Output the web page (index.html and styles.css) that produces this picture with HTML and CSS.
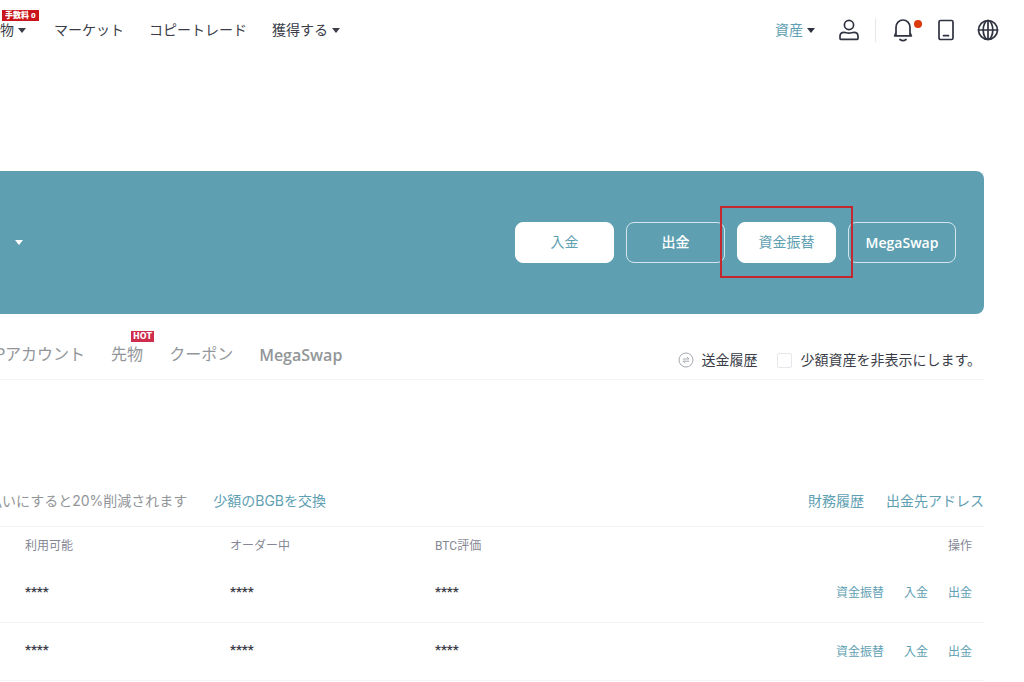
FILE: index.html
```html
<!DOCTYPE html>
<html lang="ja">
<head>
<meta charset="utf-8">
<meta name="viewport" content="width=device-width, initial-scale=1">
<title>資産</title>
<link rel="stylesheet" href="styles.css">
</head>
<body>
<header class="header">
  <nav class="nav">
    <a class="nav-item" href="#">物<span class="caret"></span><span class="badge badge-fee">手数料 0</span></a>
    <a class="nav-item" href="#">マーケット</a>
    <a class="nav-item" href="#">コピートレード</a>
    <a class="nav-item" href="#">獲得する<span class="caret"></span></a>
  </nav>
  <div class="tools">
    <a class="nav-item assets" href="#">資産<span class="caret"></span></a>
    <button class="icon-btn user" aria-label="アカウント"><svg width="22" height="22" viewBox="0 0 22 22"><circle cx="11" cy="6" r="4.6"/><path d="M2 19.5v-2.2c0-2.4 1.6-3.9 4-3.9 1.8 0 2.800.7 5 .7s3.200-.7 5-.7c2.400 0 4 1.500 4 3.900v2.200c0 .5-.3.800-.8.800H2.800c-.5 0-.8-.3-.8-.8z"/></svg></button>
    <span class="divider"></span>
    <button class="icon-btn bell" aria-label="通知"><svg width="22" height="24" viewBox="0 0 22 24"><path d="M4 17.500V9.200a7 7.200 0 0 1 14 0v8.300M2.600 17.800h16.800M4 14.500l-1.200 3.200M18 14.500l1.200 3.200M8 21.500c1.600 1.200 4.400 1.200 6 0"/></svg><span class="dot"></span></button>
    <button class="icon-btn phone" aria-label="アプリ"><svg width="18" height="22" viewBox="0 0 18 22"><rect x="2" y="1.500" width="14" height="19" rx="1.500"/><path d="M6.500 16.700h5"/></svg></button>
    <button class="icon-btn" aria-label="言語"><svg width="22" height="22" viewBox="0 0 22 22"><circle cx="11" cy="11" r="9.500"/><ellipse cx="11" cy="11" rx="4.800" ry="9.500"/><path d="M11 1.500v19M1.500 11h19"/></svg></button>
  </div>
</header>
<main class="main">
  <section class="banner">
    <button class="caret-btn" aria-label="通貨を選択"><span class="caret"></span></button>
    <div class="actions">
      <button class="btn btn-fill">入金</button>
      <button class="btn">出金</button>
      <div class="marked"><button class="btn btn-fill">資金振替</button><span class="mark"></span></div>
      <button class="btn btn-wide">MegaSwap</button>
    </div>
  </section>
  <div class="tabbar">
    <nav class="tabs">
      <a class="tab" href="#">Pアカウント</a>
      <a class="tab" href="#">先物<span class="badge badge-hot">HOT</span></a>
      <a class="tab" href="#">クーポン</a>
      <a class="tab" href="#">MegaSwap</a>
    </nav>
    <div class="options">
      <a class="history" href="#"><svg width="16" height="16" viewBox="0 0 16 16"><circle cx="8" cy="8" r="7"/><path d="M4.800 7h6.200L9 5M11.200 9.200H5l2 2"/></svg>送金履歴</a>
      <label class="hide-small"><input type="checkbox">少額資産を非表示にします。</label>
    </div>
  </div>
  <div class="info">
    <div class="info-side">
      <span class="note">払いにすると20%削減されます</span>
      <a href="#">少額のBGBを交換</a>
    </div>
    <div class="info-links">
      <a href="#">財務履歴</a>
      <a href="#">出金先アドレス</a>
    </div>
  </div>
  <table class="table">
    <thead><tr><th class="first">利用可能</th><th class="mid">オーダー中</th><th>BTC評価</th><th class="ops">操作</th></tr></thead>
    <tbody>
      <tr><td class="first">****</td><td>****</td><td>****</td><td class="ops"><a href="#">資金振替</a><a href="#">入金</a><a href="#">出金</a></td></tr>
      <tr><td class="first">****</td><td>****</td><td>****</td><td class="ops"><a href="#">資金振替</a><a href="#">入金</a><a href="#">出金</a></td></tr>
    </tbody>
  </table>
</main>
</body>
</html>
```
FILE: styles.css
```css
* { box-sizing: border-box; }
body {
  margin: 0;
  overflow: hidden;
  background: #fff;
  color: #3a3d48;
  font: 14px/20px Roboto, "Noto Sans CJK JP", sans-serif;
}
a { color: #5ea0b2; text-decoration: none; white-space: nowrap; }
button { font: inherit; cursor: pointer; }
.header {
  display: flex;
  justify-content: space-between;
  align-items: center;
  height: 60px;
  padding-right: 25px;
}
.nav { display: flex; gap: 25px; }
.nav-item { position: relative; display: flex; align-items: center; gap: 4px; color: #3a3d48; }
.nav .nav-item:first-child { margin-right: 3px; }
.caret {
  border: 4px solid transparent;
  border-top: 5px solid currentColor;
  border-bottom: 0;
}
.badge { position: absolute; color: #fff; font-weight: 900; white-space: nowrap; }
.badge-fee {
  top: -10px;
  left: 2px;
  padding: 0 3px;
  background: #c9151b;
  font-size: 8px;
  line-height: 11px;
}
.tools { display: flex; align-items: center; }
.assets { color: #5ea0b2; margin-right: 23px; }
.assets .caret { color: #2f3340; }
.icon-btn { position: relative; display: flex; padding: 0; border: 0; background: none; }
.icon-btn svg { fill: none; stroke: #2f3340; stroke-width: 1.7; stroke-linecap: round; stroke-linejoin: round; }
.divider { width: 1px; height: 24px; margin: 0 16px 0 15px; background: #e6e7ea; }
.bell { margin-right: 23px; }
.phone { margin-right: 22px; }
.dot { position: absolute; top: 2px; right: -8px; width: 8px; height: 8px; border-radius: 50%; background: #dc3a0c; }
.main { margin: 111px 40px 0 0; }
.banner {
  display: flex;
  align-items: center;
  justify-content: space-between;
  padding: 51px 28px 51px 15px;
  border-radius: 0 8px 8px 0;
  background: #5ea0b2;
}
.caret-btn { display: flex; padding: 0; border: 0; background: none; color: #fff; }
.actions { display: flex; gap: 12px; }
.btn {
  display: block;
  min-width: 99px;
  padding: 10px 16px;
  border: 1px solid #d4e6eb;
  border-radius: 8px;
  background: transparent;
  color: #fff;
  font-weight: 500;
  line-height: 19px;
}
.btn-fill { border-color: #fff; background: #fff; color: #5ea0b2; font-weight: 400; }
.btn-wide { min-width: 108px; font-family: "Open Sans", sans-serif; font-weight: 600; }
.marked { position: relative; }
.mark { position: absolute; inset: -16px -17px -15px; border: 2px solid #c4282f; pointer-events: none; }
.tabbar {
  display: flex;
  justify-content: space-between;
  height: 66px;
  padding-top: 29px;
  border-bottom: 1px solid #f4f4f6;
}
.tabs { display: flex; gap: 26px; margin-left: -5px; font-size: 16px; line-height: 24px; }
.tab { position: relative; color: #929699; }
.tab:last-child { font-family: "Open Sans", sans-serif; font-weight: 600; }
.badge-hot {
  top: -12px;
  left: 20px;
  padding: 0 2px;
  background: #cf2d4e;
  font: 700 8px/11px "DejaVu Sans", sans-serif;
}
.options { display: flex; gap: 20px; padding: 7px 3px 0 0; line-height: 20px; }
.history { display: flex; align-items: center; gap: 7px; color: #3a3d48; height: 20px; }
.history svg { fill: none; stroke: #a3a8b0; stroke-width: 1; }
.hide-small { display: flex; align-items: center; gap: 8px; height: 20px; white-space: nowrap; }
.hide-small input { appearance: none; width: 15px; height: 15px; margin: 0; border: 1px solid #e6e7ea; border-radius: 2px; }
.info {
  display: flex;
  justify-content: space-between;
  margin-top: 111px;
  padding-bottom: 15px;
  font-family: Inter, "Noto Sans CJK JP", sans-serif;
}
.info-side { display: flex; gap: 26px; margin-left: -12px; }
.info-links { display: flex; gap: 22px; }
.note { color: #929699; white-space: nowrap; }
.table { width: 100%; border-collapse: collapse; table-layout: fixed; font-size: 12px; }
.table th { height: 38px; padding: 0; border-top: 1px solid #f4f4f6; color: #858795; font-weight: 400; text-align: left; }
.table td { height: 58px; padding: 0 0 3px; border-bottom: 1px solid #f4f4f6; font-size: 13px; font-weight: 700; }
.table .first { width: 230px; padding-left: 25px; }
.table .mid { width: 205px; }
.table .ops { padding: 0 12px 0 0; font-size: 12px; text-align: right; font-weight: 400; }
.ops a { margin-left: 20px; }
```
